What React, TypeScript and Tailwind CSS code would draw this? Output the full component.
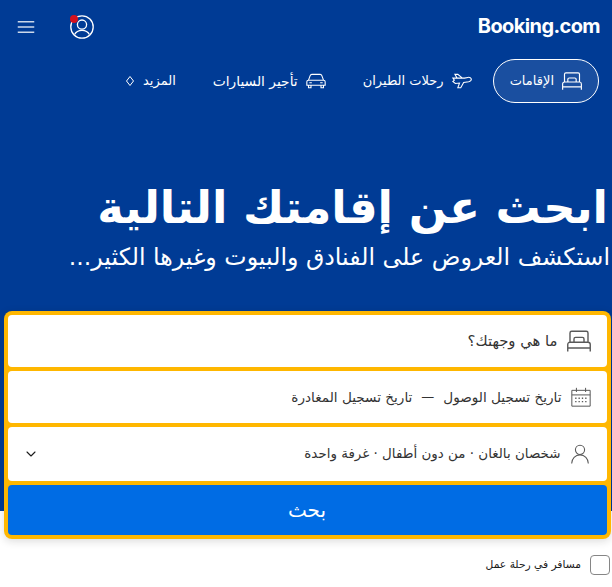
import React from "react";
import { ChevronDown } from "lucide-react";

function BedIcon({ className }: { className: string }) {
  return (
    <svg viewBox="0 0 24 24" fill="none" stroke="currentColor" strokeWidth="1.4" className={className}>
      <path d="M.75 22.500v-7c0-1.300.9-2.300 2.200-2.300h18.100c1.300 0 2.200 1 2.200 2.300v7M.75 19h22.500M3 13V4c0-1 .8-1.700 1.700-1.700h14.600c.9 0 1.700.7 1.700 1.700v9M7 13v-3c0-.9.7-1.600 1.600-1.600h6.800c.9 0 1.600.7 1.600 1.600v3" />
    </svg>
  );
}

function NavItem({ label, icon, active, reverse, wide }: { label: string; icon: React.ReactNode; active?: boolean; reverse?: boolean; wide?: boolean }) {
  return (
    <div
      className={
        "flex h-11 items-center gap-2 rounded-full px-4 text-white " +
        (wide ? "text-[13.800px] " : "text-[13px] ") +
        (active ? "border border-white bg-white/10 " : "") +
        (reverse ? "flex-row-reverse" : "")
      }
    >
      {icon}
      <span>{label}</span>
    </div>
  );
}

export default function App() {
  return (
    <div dir="rtl" className="min-h-[587px] bg-white font-['DejaVu_Sans',sans-serif]">
      {/* Blue hero */}
      <div className="h-[511px] bg-[#003b95]">
        <div className="flex h-[54px] items-center justify-between pr-3 pl-[17px]">
          <span dir="ltr" className="-mt-0.5 font-['Inter',sans-serif] text-[20px] font-bold tracking-[-0.6px] text-white">
            Booking.com
          </span>
          <div className="flex flex-row-reverse items-center gap-[35px]">
            <svg viewBox="0 0 24 24" className="h-[18px] w-[18px] text-white/80" fill="none" stroke="currentColor" strokeWidth="1.7">
              <path d="M1 5h22M1 12h22M1 19h22" />
            </svg>
            <div className="relative h-6 w-6">
              <svg viewBox="0 0 24 24" className="h-6 w-6 text-white" fill="none" stroke="currentColor" strokeWidth="1.3">
                <circle cx="12" cy="12" r="11.200" />
                <circle cx="12" cy="9.600" r="4.600" />
                <path d="M4.600 19.500c1.300-2.800 4-4.200 7.400-4.200s6.100 1.400 7.400 4.200" />
              </svg>
              <span className="absolute top-0 left-0 h-2 w-2 rounded-full bg-[#d4111e]" />
            </div>
          </div>
        </div>

        <div className="mt-[5px] flex items-center gap-[5px] pr-[13px]">
          <NavItem label="الإقامات" active icon={<BedIcon className="h-5 w-5" />} />
          <NavItem
            label="رحلات الطيران"
            icon={
              <svg viewBox="0 0 24 24" className="h-5 w-5" fill="none" stroke="currentColor" strokeWidth="1.3">
                <path d="M1 8.500h14l4-.8c2.200-.4 4.200.4 4.200 2.300 0 1.700-1.700 2.500-3.200 2.800l-6 1-3.500 6.200H7l2-5.500-5 .5-3-2.500 1.800-1.500zM6 8.500 3.500 4H7l5.500 4.500" />
              </svg>
            }
          />
          <NavItem
            label="تأجير السيارات"
            wide
            icon={
              <svg viewBox="0 0 24 24" className="h-5 w-5" fill="none" stroke="currentColor" strokeWidth="1.3">
                <path d="M3 11 5 5.500C5.300 4.600 6 4 7 4h10c1 0 1.700.6 2 1.500L21 11M3 11h18c1 0 2 1 2 2v4H1v-4c0-1 1-2 2-2zM3 17v3h3v-3M18 17v3h3v-3M4 14h3M17 14h3" />
              </svg>
            }
          />
          <NavItem
            label="المزيد"
            reverse
            icon={
              <svg viewBox="0 0 10 12" className="h-3 w-2.5" fill="none" stroke="currentColor" strokeWidth="1">
                <path d="M5 1.500 8.500 6 5 10.500 1.500 6z" />
              </svg>
            }
          />
        </div>

        <div className="mt-[78px] pr-1 text-white">
          <h1 className="text-[45px] leading-[54px] font-bold">ابحث عن إقامتك التالية</h1>
          <p className="mt-[7px] -mr-0.5 text-[23.700px] leading-[30px]">استكشف العروض على الفنادق والبيوت وغيرها الكثير...</p>
        </div>
      </div>

      {/* Search form overlaps the hero edge */}
      <div className="-mt-[200px] mr-[1.500px] ml-[3.500px]">
        <div className="relative flex flex-col gap-1 rounded-lg bg-[#ffb700] p-1 shadow-[0_2px_8px_rgba(26,26,26,0.16)]">
          <div className="flex h-[52px] items-center gap-[9px] rounded-[4px] bg-white pr-[16px] text-[#333]">
            <BedIcon className="h-6 w-6 text-[#595959]" />
            <span className="text-[14.800px] font-normal">ما هي وجهتك؟</span>
          </div>
          <div className="flex h-[52px] items-center gap-[9px] rounded-[4px] bg-white pr-[16px] text-[13.600px] text-[#333]">
            <svg viewBox="0 0 24 24" className="h-5 w-5 text-[#595959]" fill="none" stroke="currentColor" strokeWidth="1.200">
              <path d="M1 4h22v19H1zM1 9.500h22M6.500 1v5M17.500 1v5" />
              <path strokeDasharray="1.600 2.400" strokeWidth="1.600" d="M5 13.500h15M5 17.500h15" />
            </svg>
            <span>تاريخ تسجيل الوصول</span>
            <span className="text-[13px]">—</span>
            <span>تاريخ تسجيل المغادرة</span>
          </div>
          <div className="flex h-[54px] items-center gap-[9px] rounded-[4px] bg-white pr-[17px] pl-[15px] text-[13.450px] text-[#333]">
            <svg viewBox="0 0 24 24" className="h-[20px] w-[20px] text-[#595959]" fill="none" stroke="currentColor" strokeWidth="1.300">
              <circle cx="12" cy="7" r="5.500" />
              <path d="M2 23.500c0-6 4.500-10.500 10-10.500s10 4.500 10 10.500" />
            </svg>
            <span>شخصان بالغان · من دون أطفال · غرفة واحدة</span>
            <ChevronDown className="mr-auto h-4 w-4 text-[#1a1a1a]" strokeWidth={1.600} />
          </div>
          <div className="flex h-[50px] items-center justify-center rounded-[4px] bg-[#006ce4] text-[20px] font-medium text-white">
            بحث
          </div>
        </div>
      </div>

      <label className="mt-[16px] flex items-center gap-[9px] pr-[2px] text-[10.700px] font-medium text-[#1a1a1a]">
        <span className="h-5 w-5 rounded-[4px] border border-[#868686] bg-white" />
        مسافر في رحلة عمل
      </label>
    </div>
  );
}
